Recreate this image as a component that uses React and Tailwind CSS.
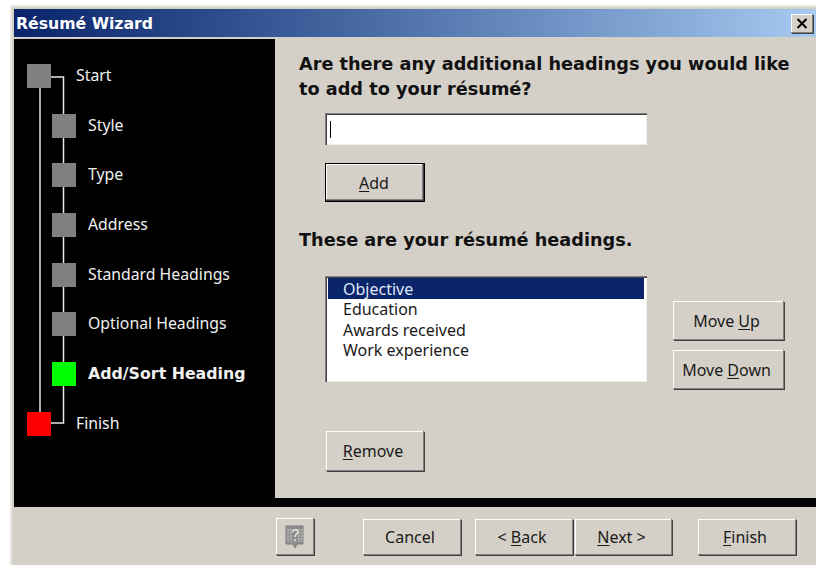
import React from "react";

const raised = "bg-[#d4d0c8] shadow-[inset_-1px_-1px_0_#808080,inset_1px_1px_0_#ffffff,1px_1px_0_#404040]";

function Key({ children }) {
  return <span className="underline underline-offset-2">{children}</span>;
}

function WinButton({ className = "", children }) {
  return (
    <button className={`${raised} flex items-center justify-center pr-[4px] text-[16px] text-[#1a1a1a] ${className}`}>
      {children}
    </button>
  );
}

const steps = [
  { label: "Start", tone: "bg-[#808080]", indent: "ml-[13px]", gap: "ml-[25px]" },
  { label: "Style", tone: "bg-[#808080]", indent: "ml-[38px]", gap: "ml-[12px]" },
  { label: "Type", tone: "bg-[#808080]", indent: "ml-[38px]", gap: "ml-[12px]" },
  { label: "Address", tone: "bg-[#808080]", indent: "ml-[38px]", gap: "ml-[12px]" },
  { label: "Standard Headings", tone: "bg-[#808080]", indent: "ml-[38px]", gap: "ml-[12px]" },
  { label: "Optional Headings", tone: "bg-[#808080]", indent: "ml-[38px]", gap: "ml-[12px]" },
  { label: "Add/Sort Heading", tone: "bg-[#00ff00]", indent: "ml-[38px]", gap: "ml-[12px]", bold: true },
  { label: "Finish", tone: "bg-[#ff0000]", indent: "ml-[13px]", gap: "ml-[25px]" },
];

function Steps() {
  return (
    <div className="relative w-[261px] shrink-0 bg-black pt-[25px]">
      {/* Tree connectors behind the step squares */}
      <svg className="absolute left-0 top-0" width="261" height="459" fill="none" stroke="#e8e8e8" strokeWidth="1.5">
        <path d="M26 40V380" />
        <path d="M37 38H49.5V384H37" />
      </svg>
      {steps.map((s) => (
        <div key={s.label} className="relative flex h-[49.7px] items-start">
          <div className={`h-[24px] w-[24px] ${s.tone} ${s.indent}`} />
          <div
            className={`${s.gap} text-[#f0f0f0] ${
              s.bold
                ? "font-['DejaVu_Sans',sans-serif] text-[15.8px] font-bold leading-[24px]"
                : "text-[15.8px] leading-[22px]"
            }`}
          >
            {s.label}
          </div>
        </div>
      ))}
    </div>
  );
}

export default function App() {
  return (
    <div className="h-[565px] w-[816px] overflow-hidden bg-white pl-[10px] pt-[5px] font-['Noto_Sans',sans-serif]">
      <div className="flex h-full flex-col bg-[#d4d0c8] pl-[4px] pt-[4px] shadow-[inset_2px_2px_0_#e9e7e2]">
        <div className="flex h-[28px] shrink-0 items-center justify-between bg-gradient-to-r from-[#0a246a] to-[#a6caf0] pl-[2px] pr-[3px]">
          <span className="pt-[1px] font-['DejaVu_Sans',sans-serif] text-[15.7px] font-bold text-white">Résumé Wizard</span>
          <button className={`${raised} flex h-[19px] w-[22px] items-center justify-center`}>
            <svg width="12" height="11" viewBox="0 0 12 11" stroke="#000" strokeWidth="2" fill="none">
              <path d="M1.5 1L10.5 10M10.5 1L1.5 10" />
            </svg>
          </button>
        </div>

        <div className="mt-[2px] flex h-[468px] shrink-0 items-start bg-black">
          <div className="flex h-full"><Steps /></div>
          <div className="h-[459px] flex-1 bg-[#d4d0c8] pl-[24px] pt-[13px] font-['DejaVu_Sans',sans-serif]">
            <h1 className="text-[17.7px] font-bold leading-[25px] text-[#111]">
              Are there any additional headings you would like
              <br />
              to add to your résumé?
            </h1>

            <div className="ml-[26px] mt-[11px] flex h-[32px] w-[322px] items-center bg-white pl-[5px] shadow-[inset_1px_1px_0_#808080,inset_2px_2px_0_#404040,inset_-1px_-1px_0_#f0eee8]">
              <div className="h-[17px] w-px bg-black" />
            </div>

            <div className="ml-[26px] mt-[18px] h-[39px] w-[100px] border border-black">
              <button className="flex h-full w-full items-center justify-center bg-[#d4d0c8] pr-[2px] pt-[1px] font-['Noto_Sans',sans-serif] text-[16px] text-[#1a1a1a] shadow-[inset_-1px_-1px_0_#404040,inset_-2px_-2px_0_#808080,inset_1px_1px_0_#ffffff]">
                <span><Key>A</Key>dd</span>
              </button>
            </div>

            <h2 className="mt-[26px] text-[17.7px] font-bold leading-[25px] text-[#111]">These are your résumé headings.</h2>

            <div className="ml-[26px] mt-[23px] flex items-start">
              <div className="h-[106px] w-[322px] bg-white px-[3px] pt-[2px] font-['Noto_Sans',sans-serif] text-[16px] leading-[20.3px] text-[#1a1a1a] shadow-[inset_1px_1px_0_#808080,inset_2px_2px_0_#404040,inset_-1px_-1px_0_#f0eee8]">
                <div className="bg-[#0a246a] pl-[15px] pt-[1px] text-[#dfe6f5]">Objective</div>
                <div className="pl-[15px]">Education</div>
                <div className="pl-[15px]">Awards received</div>
                <div className="pl-[15px]">Work experience</div>
              </div>
              <div className="ml-[26px] mt-[25px] flex flex-col gap-[10px] font-['Noto_Sans',sans-serif]">
                <WinButton className="h-[39px] w-[111px]"><span>Move <Key>U</Key>p</span></WinButton>
                <WinButton className="h-[39px] w-[111px]"><span>Move <Key>D</Key>own</span></WinButton>
              </div>
            </div>

            <WinButton className="ml-[27px] mt-[42px] h-[40px] w-[98px] font-['Noto_Sans',sans-serif]"><span><Key>R</Key>emove</span></WinButton>
          </div>
        </div>

        <div className="flex flex-1 items-start pl-[262px] pt-[11px]">
          <button className={`${raised} flex h-[37px] w-[38px] items-center justify-center`}>
            {/* Disabled help-book glyph */}
            <svg width="22" height="26" viewBox="0 0 22 26">
              <path d="M2 2H19V20H13L11 24L9 20H2Z" fill="#8f8f8f" stroke="#7b7b7b" />
              <path d="M4 5V18M7 5V18M15 5V18M18 5V18" stroke="#d4d0c8" strokeDasharray="2 1" />
              <path d="M8.5 8C9 5 14 5 14 8C14 10 11 10 11 13M11 15V17" stroke="#e6e4de" strokeWidth="1.5" fill="none" />
            </svg>
          </button>
          <WinButton className="ml-[49px] mt-px h-[36px] w-[98px]">Cancel</WinButton>
          <WinButton className="ml-[14px] mt-px h-[36px] w-[98px]"><span>&lt; <Key>B</Key>ack</span></WinButton>
          <WinButton className="ml-[2px] mt-px h-[36px] w-[97px]"><span><Key>N</Key>ext &gt;</span></WinButton>
          <WinButton className="ml-[26px] mt-px h-[36px] w-[98px]"><span><Key>F</Key>inish</span></WinButton>
        </div>
      </div>
    </div>
  );
}
